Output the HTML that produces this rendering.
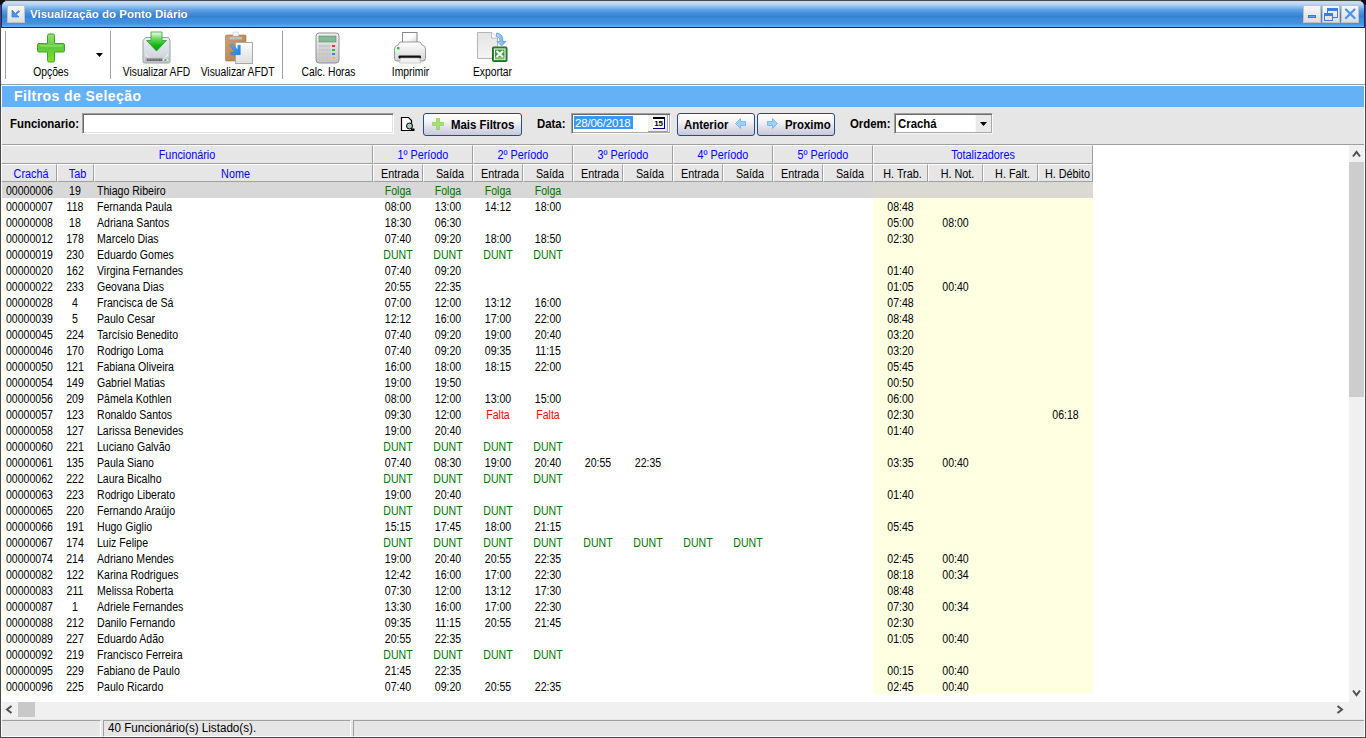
<!DOCTYPE html><html><head><meta charset="utf-8"><style>html,body{margin:0;padding:0;width:1366px;height:738px;overflow:hidden;background:#4a4a4a;font-family:"Liberation Sans",sans-serif;}
body div, body span{position:absolute;box-sizing:border-box;}
body svg{position:absolute;}
.blue{color:#0000ff;}
.green{color:#008000;}
.red{color:#ff0000;}
.hc{background:#e6e6e6;border-left:1px solid #fff;border-top:1px solid #fff;border-right:1px solid #a0a0a0;border-bottom:1px solid #a0a0a0;}
.ht{left:0;right:0;text-align:center;font-size:12px;line-height:14px;white-space:nowrap;color:#000;transform:scaleX(0.9);}
.ht.blue{color:#0000ff;}
.dt{font-size:12px;line-height:16px;height:16px;white-space:nowrap;color:#000;transform:scaleX(0.88);transform-origin:0 0;}
.dc{font-size:12px;line-height:16px;height:16px;white-space:nowrap;text-align:center;color:#000;transform:scaleX(0.88);}
.dc.green{color:#007400;}
.dc.red{color:#ff0000;}
.tl{font-size:12px;line-height:13px;white-space:nowrap;text-align:center;color:#000;transform:scaleX(0.86);}
.bl{font-size:12px;font-weight:bold;line-height:14px;white-space:nowrap;color:#000;transform:scaleX(0.95);transform-origin:0 0;}
.btn{border:1px solid #1f4e89;border-radius:3px;background:linear-gradient(to bottom,#ffffff 0%,#f4f4f8 35%,#e2e2ec 60%,#c8c8da 100%);}
.sep{width:1px;background:#a0a0a0;}
.tbtn{background:linear-gradient(to bottom,#f8f8f8,#dcdcdc);border:1px solid #c4c0bc;}
</style></head><body>
<!-- window frame -->
<div style="left:1px;top:28px;width:1364px;height:709px;background:#ffffff"></div>
<!-- title bar -->
<div style="left:0;top:0;width:5px;height:5px;background:#101010"></div><div style="left:1361px;top:0;width:5px;height:5px;background:#101010"></div>
<div style="left:1px;top:1px;width:1364px;height:27px;background:#1e1a9c;border-radius:6px 6px 0 0"></div>
<div style="left:2px;top:1px;width:1362px;height:26px;border-radius:5px 5px 0 0;background:linear-gradient(to bottom,#c6dcf8 0px,#c2daf6 2.5px,#9cc6f0 5px,#62a6ea 8.5px,#4a92de 11.5px,#3282d4 15.5px,#3c8cda 18px,#3e92e0 22px,#4aa4ee 24.5px,#64b8f8 26px)"></div>
<div class="tbtn" style="left:7px;top:5px;width:18px;height:18px"></div>
<svg style="left:11px;top:9px" width="10" height="10" viewBox="0 0 10 10"><path d="M1 1 L1 8 L8 8 L5.5 5.5 L8.5 2.5 L7.5 1.5 L4.5 4.5 Z" fill="#4a94f0" stroke="#3070c8" stroke-width="0.6"/></svg>
<div style="left:30px;top:6px;font-size:11.5px;font-weight:bold;color:#fff;line-height:16px;white-space:nowrap;text-shadow:0 0 1px #4060a0">Visualização do Ponto Diário</div>
<div class="tbtn" style="left:1303px;top:5px;width:18px;height:18px"></div>
<div style="left:1308px;top:15px;width:8px;height:3px;background:#5aa8f4;border:1px solid #3a78d0"></div>
<div class="tbtn" style="left:1322px;top:5px;width:18px;height:18px"></div>
<div style="left:1327px;top:8px;width:11px;height:10px;border:1px solid #3a7ee0;border-top-width:3px"></div>
<div style="left:1324px;top:13px;width:9px;height:8px;border:1px solid #3a7ee0;border-top-width:3px;background:#e4e4e4"></div>
<div class="tbtn" style="left:1341px;top:5px;width:18px;height:18px"></div>
<svg style="left:1344px;top:8px" width="12" height="12" viewBox="0 0 12 12"><path d="M2 1.5 L10.5 10 M10.5 1.5 L2 10" stroke="#4a96ee" stroke-width="2.3" stroke-linecap="round"/></svg>

<!-- toolbar -->
<div class="sep" style="left:5px;top:31px;height:48px"></div>
<div class="sep" style="left:110px;top:31px;height:48px"></div>
<div class="sep" style="left:282px;top:31px;height:48px"></div>
<div style="left:1px;top:84px;width:1364px;height:1px;background:#a0a0a0"></div>

<!-- plus icon -->
<svg style="left:36px;top:33px" width="31" height="31" viewBox="0 0 31 31">
<defs><linearGradient id="gp" x1="0" y1="0" x2="0" y2="1"><stop offset="0" stop-color="#98e070"/><stop offset="0.5" stop-color="#5cc83c"/><stop offset="1" stop-color="#88e020"/></linearGradient></defs>
<path d="M11.5 2.5 a1.5 1.5 0 0 1 1.5 -1.5 h4 a1.5 1.5 0 0 1 1.5 1.5 v8 h8.5 a1.5 1.5 0 0 1 1.5 1.5 v5.5 a1.5 1.5 0 0 1 -1.5 1.5 h-8.5 v8.5 a1.5 1.5 0 0 1 -1.5 1.5 h-4 a1.5 1.5 0 0 1 -1.5 -1.5 v-8.5 h-8.5 a1.5 1.5 0 0 1 -1.5 -1.5 v-5.5 a1.5 1.5 0 0 1 1.5 -1.5 h8.5 z" fill="url(#gp)" stroke="#3ca428" stroke-width="1"/>
<path d="M4 13 h22" stroke="#b0f090" stroke-width="1" opacity="0.7"/>
</svg>
<svg style="left:96px;top:53px" width="8" height="5" viewBox="0 0 8 5"><path d="M0 0 H7 L3.5 4 Z" fill="#000"/></svg>
<div class="tl" style="left:21px;top:66px;width:60px">Opções</div>

<!-- drive icon -->
<svg style="left:138px;top:28px" width="38" height="38" viewBox="0 0 38 38">
<defs><linearGradient id="gd" x1="0" y1="0" x2="0" y2="1"><stop offset="0" stop-color="#eceef2"/><stop offset="0.7" stop-color="#d4d8e0"/><stop offset="1" stop-color="#c4c8d0"/></linearGradient>
<linearGradient id="ga" x1="0" y1="0" x2="0" y2="1"><stop offset="0" stop-color="#f0fff0"/><stop offset="0.35" stop-color="#70d860"/><stop offset="0.7" stop-color="#10b810"/><stop offset="1" stop-color="#089808"/></linearGradient></defs>
<path d="M7.5 9.5 h23 l1.5 3 v21 a1.5 1.5 0 0 1 -1.5 1.5 h-24 a1.5 1.5 0 0 1 -1.5 -1.5 v-21 z" fill="url(#gd)" stroke="#9ca0a8" stroke-width="1"/>
<path d="M8 26 a11 5 0 0 0 22 0" fill="none" stroke="#f4f4f6" stroke-width="1"/>
<rect x="7.5" y="30" width="23" height="3.5" fill="#e8e8ec" stroke="#b0b4bc" stroke-width="0.6"/>
<rect x="8.5" y="30.5" width="16" height="2.5" fill="#68686c"/>
<path d="M10 31.8 h13" stroke="#a8a8b0" stroke-width="0.7" stroke-dasharray="2 1"/>
<rect x="26.5" y="31" width="2" height="2" fill="#30d030"/>
<path d="M13 4 h11 v8.5 h4.5 l-10 10.5 l-10 -10.5 h4.5 z" fill="url(#ga)" stroke="#30a030" stroke-width="0.8" stroke-linejoin="round"/>
</svg>
<div class="tl" style="left:116px;top:66px;width:81px">Visualizar AFD</div>

<!-- clipboard icon -->
<svg style="left:220px;top:28px" width="38" height="38" viewBox="0 0 38 38">
<defs><linearGradient id="gc" x1="0" y1="0" x2="1" y2="1"><stop offset="0" stop-color="#d0a070"/><stop offset="1" stop-color="#b07c48"/></linearGradient>
<linearGradient id="gw" x1="0" y1="0" x2="0" y2="1"><stop offset="0" stop-color="#fafafa"/><stop offset="1" stop-color="#e0e0e0"/></linearGradient>
<linearGradient id="gb" x1="0" y1="0" x2="1" y2="1"><stop offset="0" stop-color="#60b0f0"/><stop offset="1" stop-color="#1480e0"/></linearGradient></defs>
<rect x="5.5" y="7" width="20.5" height="26" rx="1" fill="url(#gc)" stroke="#a87440" stroke-width="0.6"/>
<rect x="13" y="4" width="5.5" height="4" fill="#f4f4f4" stroke="#c8c8c8" stroke-width="0.5"/>
<rect x="9.5" y="9" width="12.5" height="2.5" fill="#b8c0c8"/>
<rect x="15.5" y="14.5" width="17" height="21" fill="url(#gw)" stroke="#a8a8a8" stroke-width="1"/>
<path d="M10 17.5 l1.8 -1.8 l6 6 v-4.5 h2.5 v9.5 h-9.5 v-2.5 h4.5 z" fill="url(#gb)" stroke="#1070d0" stroke-width="0.4"/>
</svg>
<div class="tl" style="left:195px;top:66px;width:81px">Visualizar AFDT</div>

<!-- calculator -->
<svg style="left:315px;top:32px" width="25" height="32" viewBox="0 0 25 32">
<defs><linearGradient id="gk" x1="0" y1="0" x2="0" y2="1"><stop offset="0" stop-color="#f4f4f4"/><stop offset="1" stop-color="#c4c4c4"/></linearGradient></defs>
<rect x="1" y="1" width="23" height="30" rx="3" fill="url(#gk)" stroke="#909090" stroke-width="1"/>
<rect x="4" y="4" width="17" height="6" fill="#88b898" stroke="#608868" stroke-width="0.6"/>
<g fill="#d4d4d4" stroke="#b0b0b0" stroke-width="0.4">
<rect x="4" y="13" width="3" height="2"/><rect x="8" y="13" width="3" height="2"/><rect x="12" y="13" width="3" height="2"/>
<rect x="4" y="17" width="3" height="2"/><rect x="8" y="17" width="3" height="2"/><rect x="12" y="17" width="3" height="2"/>
<rect x="4" y="21" width="3" height="2"/><rect x="8" y="21" width="3" height="2"/><rect x="12" y="21" width="3" height="2"/>
<rect x="4" y="25" width="3" height="2"/><rect x="8" y="25" width="3" height="2"/><rect x="12" y="25" width="3" height="2"/>
</g>
<rect x="17" y="13" width="3" height="2" fill="#e83030"/><rect x="17" y="17" width="3" height="2" fill="#30c030"/>
<rect x="17" y="21" width="3" height="2" fill="#4080f0"/><rect x="17" y="25" width="3" height="2" fill="#f0c030"/>
</svg>
<div class="tl" style="left:288px;top:66px;width:81px">Calc. Horas</div>

<!-- printer -->
<svg style="left:390px;top:28px" width="40" height="38" viewBox="0 0 40 38">
<defs><linearGradient id="gr" x1="0" y1="0" x2="0" y2="1"><stop offset="0" stop-color="#ffffff"/><stop offset="1" stop-color="#d4d4d4"/></linearGradient>
<linearGradient id="gr2" x1="0" y1="0" x2="1" y2="1"><stop offset="0" stop-color="#ffffff"/><stop offset="0.5" stop-color="#ffffff"/><stop offset="1" stop-color="#d8d8d8"/></linearGradient></defs>
<rect x="12.5" y="4.5" width="14.5" height="10" fill="url(#gr2)" stroke="#888888" stroke-width="1"/>
<path d="M10 14 h20 l2 3 a4 4 0 0 1 3.5 4 v9.5 a2.5 2.5 0 0 1 -2.5 2.5 h-26 a2.5 2.5 0 0 1 -2.5 -2.5 v-9.5 a4 4 0 0 1 3.5 -4 z" fill="url(#gr)" stroke="#909090" stroke-width="0.9"/>
<rect x="8.5" y="27.5" width="22.5" height="3" rx="1" fill="#101010"/>
<path d="M10.5 30 h19 l1 5 h-21 z" fill="#f2f2f2" stroke="#b0b0b0" stroke-width="0.6"/>
<rect x="7" y="19" width="2.5" height="2.5" rx="0.8" fill="#30c030"/>
</svg>
<div class="tl" style="left:370px;top:66px;width:81px">Imprimir</div>

<!-- export -->
<svg style="left:472px;top:28px" width="40" height="38" viewBox="0 0 40 38">
<defs><linearGradient id="gdoc" x1="0" y1="0" x2="0" y2="1"><stop offset="0" stop-color="#e4e4e4"/><stop offset="1" stop-color="#f4f4f4"/></linearGradient>
<linearGradient id="gar" x1="0" y1="0" x2="1" y2="0"><stop offset="0" stop-color="#b8dcf8"/><stop offset="1" stop-color="#60a8f0"/></linearGradient></defs>
<path d="M5.5 4.5 h14.5 l5.5 5.5 v20.5 h-20 z" fill="url(#gdoc)" stroke="#b4b4b4" stroke-width="1"/>
<path d="M19.5 4.5 v5.5 h6" fill="#ffffff" stroke="#b4b4b4" stroke-width="0.9"/>
<path d="M24.5 5 q6.5 0.5 6.5 8 v0.5 h3 l-4.5 4.5 l-4.5 -4.5 h3 v-0.5 q0 -4 -3.5 -4.5 z" fill="url(#gar)" stroke="#5098e0" stroke-width="0.7" stroke-linejoin="round"/>
<rect x="20.5" y="19" width="14.5" height="14.5" rx="1" fill="#2e8a2e" stroke="#1e6e1e" stroke-width="1"/>
<rect x="22" y="20.5" width="11.5" height="11.5" fill="#ffffff"/>
<rect x="23" y="21.5" width="9.5" height="8" fill="#3a9a3a"/>
<rect x="23" y="29.5" width="9.5" height="2" fill="#70c060"/>
<path d="M24.5 23 l6.5 6 M31 23 l-6.5 6" stroke="#ffffff" stroke-width="2.2"/>
</svg>
<div class="tl" style="left:452px;top:66px;width:81px">Exportar</div>

<!-- filtros band -->
<div style="left:2px;top:86px;width:1362px;height:21px;background:#64b1f5"></div>
<div style="left:14px;top:88px;font-size:14px;font-weight:bold;color:#fff;letter-spacing:0.42px;line-height:16px;white-space:nowrap">Filtros de Seleção</div>

<!-- filter panel -->
<div style="left:2px;top:107px;width:1362px;height:37px;background:#e6e6e6"></div>
<div style="left:2px;top:144px;width:1362px;height:1px;background:#a0a0a0"></div>
<div class="bl" style="left:10px;top:117px">Funcionario:</div>
<div style="left:82px;top:113px;width:312px;height:21px;background:#fff;border-top:1px solid #a0a0a0;border-left:1px solid #a0a0a0;border-right:1px solid #fff;border-bottom:1px solid #fff;box-shadow:inset 1px 1px 0 #696969,inset -1px -1px 0 #e3e3e3"></div>
<svg style="left:400px;top:116px" width="17" height="16" viewBox="0 0 17 16"><path d="M1.5 1.5 h7 l3 3 v10 h-10 z" fill="#fff" stroke="#000" stroke-width="1.2"/><circle cx="9.5" cy="10" r="3" fill="#a8c8c8" stroke="#000" stroke-width="1"/><rect x="12" y="12.5" width="2.5" height="2.5" fill="#000"/></svg>
<div class="btn" style="left:423px;top:113px;width:99px;height:23px"></div>
<svg style="left:432px;top:118px" width="12" height="12" viewBox="0 0 12 12"><path d="M4.5 0.5 h3 v4 h4 v3 h-4 v4 h-3 v-4 h-4 v-3 h4 z" fill="#a8e070" stroke="#90d058" stroke-width="0.8" stroke-linejoin="round"/></svg>
<div class="bl" style="left:451px;top:118px">Mais Filtros</div>
<div class="bl" style="left:537px;top:117px">Data:</div>
<div style="left:571px;top:113px;width:100px;height:21px;background:#fff;border-top:1px solid #a0a0a0;border-left:1px solid #a0a0a0;border-right:1px solid #f8f8f8;border-bottom:1px solid #f8f8f8;box-shadow:inset 1px 1px 0 #696969,inset -1px -1px 0 #a8a8a8"></div>
<div style="left:574px;top:116px;width:59px;height:13px;background:#3399ff"></div>
<div style="left:575px;top:116px;font-size:11.5px;line-height:14px;color:#fff;white-space:nowrap;letter-spacing:-0.2px">28/06/2018</div>
<div style="left:648px;top:115px;width:20px;height:17px;background:#f0f0f0;border-right:1px solid #a0a0a0;border-bottom:1px solid #a0a0a0"></div>
<div style="left:653px;top:117px;width:12px;height:12px;border-top:2px solid #000;border-right:1px solid #000080;border-bottom:1px solid #000080;background:#fff;font-size:8px;font-weight:bold;line-height:9px;text-align:center;letter-spacing:-0.3px">15</div>
<div class="btn" style="left:677px;top:113px;width:78px;height:23px"></div>
<div class="bl" style="left:684px;top:118px">Anterior</div>
<svg style="left:735px;top:118px" width="11" height="11" viewBox="0 0 11 11"><path d="M0.5 5.5 l5 -5 v3 h5 v4 h-5 v3 z" fill="#9cd0f8" stroke="#6cb0e8" stroke-width="0.8"/></svg>
<div class="btn" style="left:757px;top:113px;width:78px;height:23px"></div>
<svg style="left:767px;top:118px" width="11" height="11" viewBox="0 0 11 11"><path d="M10.5 5.5 l-5 -5 v3 h-5 v4 h5 v3 z" fill="#9cd0f8" stroke="#6cb0e8" stroke-width="0.8"/></svg>
<div class="bl" style="left:785px;top:118px">Proximo</div>
<div class="bl" style="left:850px;top:117px">Ordem:</div>
<div style="left:894px;top:113px;width:99px;height:21px;background:#fff;border-top:1px solid #a0a0a0;border-left:1px solid #a0a0a0;border-right:1px solid #f8f8f8;border-bottom:1px solid #f8f8f8;box-shadow:inset 1px 1px 0 #696969,inset -1px -1px 0 #a8a8a8"></div>
<div class="bl" style="left:898px;top:117px">Crachá</div>
<div style="left:975px;top:115px;width:16px;height:17px;background:#eaeaea;border-left:1px solid #f8f8f8"></div>
<svg style="left:980px;top:122px" width="8" height="5" viewBox="0 0 8 5"><path d="M0 0 H7 L3.5 4 Z" fill="#000"/></svg>

<!-- grid -->
<div style="left:2px;top:145px;width:1347px;height:557px;background:#fff"></div>

<div class="hc" style="left:1px;top:145px;width:372px;height:19px"><span class="ht blue" style="top:2px">Funcionário</span></div>
<div class="hc" style="left:373px;top:145px;width:100px;height:19px"><span class="ht blue" style="top:2px">1º Período</span></div>
<div class="hc" style="left:473px;top:145px;width:100px;height:19px"><span class="ht blue" style="top:2px">2º Período</span></div>
<div class="hc" style="left:573px;top:145px;width:100px;height:19px"><span class="ht blue" style="top:2px">3º Período</span></div>
<div class="hc" style="left:673px;top:145px;width:100px;height:19px"><span class="ht blue" style="top:2px">4º Período</span></div>
<div class="hc" style="left:773px;top:145px;width:100px;height:19px"><span class="ht blue" style="top:2px">5º Período</span></div>
<div class="hc" style="left:873px;top:145px;width:220px;height:19px"><span class="ht blue" style="top:2px">Totalizadores</span></div>
<div class="hc" style="left:1px;top:164px;width:56px;height:18px"><span class="ht blue" style="top:2px;left:1.5px;right:-1.5px">Crachá</span></div>
<div class="hc" style="left:57px;top:164px;width:37px;height:18px"><span class="ht blue" style="top:2px;left:1.5px;right:-1.5px">Tab</span></div>
<div class="hc" style="left:94px;top:164px;width:279px;height:18px"><span class="ht blue" style="top:2px;left:1.5px;right:-1.5px">Nome</span></div>
<div class="hc" style="left:373px;top:164px;width:50px;height:18px"><span class="ht " style="top:2px;left:1.5px;right:-1.5px">Entrada</span></div>
<div class="hc" style="left:423px;top:164px;width:50px;height:18px"><span class="ht " style="top:2px;left:1.5px;right:-1.5px">Saída</span></div>
<div class="hc" style="left:473px;top:164px;width:50px;height:18px"><span class="ht " style="top:2px;left:1.5px;right:-1.5px">Entrada</span></div>
<div class="hc" style="left:523px;top:164px;width:50px;height:18px"><span class="ht " style="top:2px;left:1.5px;right:-1.5px">Saída</span></div>
<div class="hc" style="left:573px;top:164px;width:50px;height:18px"><span class="ht " style="top:2px;left:1.5px;right:-1.5px">Entrada</span></div>
<div class="hc" style="left:623px;top:164px;width:50px;height:18px"><span class="ht " style="top:2px;left:1.5px;right:-1.5px">Saída</span></div>
<div class="hc" style="left:673px;top:164px;width:50px;height:18px"><span class="ht " style="top:2px;left:1.5px;right:-1.5px">Entrada</span></div>
<div class="hc" style="left:723px;top:164px;width:50px;height:18px"><span class="ht " style="top:2px;left:1.5px;right:-1.5px">Saída</span></div>
<div class="hc" style="left:773px;top:164px;width:50px;height:18px"><span class="ht " style="top:2px;left:1.5px;right:-1.5px">Entrada</span></div>
<div class="hc" style="left:823px;top:164px;width:50px;height:18px"><span class="ht " style="top:2px;left:1.5px;right:-1.5px">Saída</span></div>
<div class="hc" style="left:873px;top:164px;width:55px;height:18px"><span class="ht " style="top:2px;left:1.5px;right:-1.5px">H. Trab.</span></div>
<div class="hc" style="left:928px;top:164px;width:55px;height:18px"><span class="ht " style="top:2px;left:1.5px;right:-1.5px">H. Not.</span></div>
<div class="hc" style="left:983px;top:164px;width:55px;height:18px"><span class="ht " style="top:2px;left:1.5px;right:-1.5px">H. Falt.</span></div>
<div class="hc" style="left:1038px;top:164px;width:55px;height:18px"><span class="ht " style="top:2px;left:1.5px;right:-1.5px">H. Débito</span></div>
<div style="left:873px;top:182px;width:220px;height:512px;background:#ffffe1"></div>
<div style="left:2px;top:182px;width:871px;height:16px;background:#d8d8d8"></div>
<div style="left:873px;top:182px;width:220px;height:16px;background:#dadad2"></div>
<div class="dt" style="left:6px;top:183px">00000006</div>
<div class="dc" style="left:57px;top:183px;width:36px">19</div>
<div class="dt" style="left:97px;top:183px">Thiago Ribeiro</div>
<div class="dc green" style="left:373px;top:183px;width:50px">Folga</div>
<div class="dc green" style="left:423px;top:183px;width:50px">Folga</div>
<div class="dc green" style="left:473px;top:183px;width:50px">Folga</div>
<div class="dc green" style="left:523px;top:183px;width:50px">Folga</div>
<div class="dt" style="left:6px;top:199px">00000007</div>
<div class="dc" style="left:57px;top:199px;width:36px">118</div>
<div class="dt" style="left:97px;top:199px">Fernanda Paula</div>
<div class="dc" style="left:373px;top:199px;width:50px">08:00</div>
<div class="dc" style="left:423px;top:199px;width:50px">13:00</div>
<div class="dc" style="left:473px;top:199px;width:50px">14:12</div>
<div class="dc" style="left:523px;top:199px;width:50px">18:00</div>
<div class="dc" style="left:873px;top:199px;width:55px">08:48</div>
<div class="dt" style="left:6px;top:215px">00000008</div>
<div class="dc" style="left:57px;top:215px;width:36px">18</div>
<div class="dt" style="left:97px;top:215px">Adriana Santos</div>
<div class="dc" style="left:373px;top:215px;width:50px">18:30</div>
<div class="dc" style="left:423px;top:215px;width:50px">06:30</div>
<div class="dc" style="left:873px;top:215px;width:55px">05:00</div>
<div class="dc" style="left:928px;top:215px;width:55px">08:00</div>
<div class="dt" style="left:6px;top:231px">00000012</div>
<div class="dc" style="left:57px;top:231px;width:36px">178</div>
<div class="dt" style="left:97px;top:231px">Marcelo Dias</div>
<div class="dc" style="left:373px;top:231px;width:50px">07:40</div>
<div class="dc" style="left:423px;top:231px;width:50px">09:20</div>
<div class="dc" style="left:473px;top:231px;width:50px">18:00</div>
<div class="dc" style="left:523px;top:231px;width:50px">18:50</div>
<div class="dc" style="left:873px;top:231px;width:55px">02:30</div>
<div class="dt" style="left:6px;top:247px">00000019</div>
<div class="dc" style="left:57px;top:247px;width:36px">230</div>
<div class="dt" style="left:97px;top:247px">Eduardo Gomes</div>
<div class="dc green" style="left:373px;top:247px;width:50px">DUNT</div>
<div class="dc green" style="left:423px;top:247px;width:50px">DUNT</div>
<div class="dc green" style="left:473px;top:247px;width:50px">DUNT</div>
<div class="dc green" style="left:523px;top:247px;width:50px">DUNT</div>
<div class="dt" style="left:6px;top:263px">00000020</div>
<div class="dc" style="left:57px;top:263px;width:36px">162</div>
<div class="dt" style="left:97px;top:263px">Virgina Fernandes</div>
<div class="dc" style="left:373px;top:263px;width:50px">07:40</div>
<div class="dc" style="left:423px;top:263px;width:50px">09:20</div>
<div class="dc" style="left:873px;top:263px;width:55px">01:40</div>
<div class="dt" style="left:6px;top:279px">00000022</div>
<div class="dc" style="left:57px;top:279px;width:36px">233</div>
<div class="dt" style="left:97px;top:279px">Geovana Dias</div>
<div class="dc" style="left:373px;top:279px;width:50px">20:55</div>
<div class="dc" style="left:423px;top:279px;width:50px">22:35</div>
<div class="dc" style="left:873px;top:279px;width:55px">01:05</div>
<div class="dc" style="left:928px;top:279px;width:55px">00:40</div>
<div class="dt" style="left:6px;top:295px">00000028</div>
<div class="dc" style="left:57px;top:295px;width:36px">4</div>
<div class="dt" style="left:97px;top:295px">Francisca de Sá</div>
<div class="dc" style="left:373px;top:295px;width:50px">07:00</div>
<div class="dc" style="left:423px;top:295px;width:50px">12:00</div>
<div class="dc" style="left:473px;top:295px;width:50px">13:12</div>
<div class="dc" style="left:523px;top:295px;width:50px">16:00</div>
<div class="dc" style="left:873px;top:295px;width:55px">07:48</div>
<div class="dt" style="left:6px;top:311px">00000039</div>
<div class="dc" style="left:57px;top:311px;width:36px">5</div>
<div class="dt" style="left:97px;top:311px">Paulo Cesar</div>
<div class="dc" style="left:373px;top:311px;width:50px">12:12</div>
<div class="dc" style="left:423px;top:311px;width:50px">16:00</div>
<div class="dc" style="left:473px;top:311px;width:50px">17:00</div>
<div class="dc" style="left:523px;top:311px;width:50px">22:00</div>
<div class="dc" style="left:873px;top:311px;width:55px">08:48</div>
<div class="dt" style="left:6px;top:327px">00000045</div>
<div class="dc" style="left:57px;top:327px;width:36px">224</div>
<div class="dt" style="left:97px;top:327px">Tarcísio Benedito</div>
<div class="dc" style="left:373px;top:327px;width:50px">07:40</div>
<div class="dc" style="left:423px;top:327px;width:50px">09:20</div>
<div class="dc" style="left:473px;top:327px;width:50px">19:00</div>
<div class="dc" style="left:523px;top:327px;width:50px">20:40</div>
<div class="dc" style="left:873px;top:327px;width:55px">03:20</div>
<div class="dt" style="left:6px;top:343px">00000046</div>
<div class="dc" style="left:57px;top:343px;width:36px">170</div>
<div class="dt" style="left:97px;top:343px">Rodrigo Loma</div>
<div class="dc" style="left:373px;top:343px;width:50px">07:40</div>
<div class="dc" style="left:423px;top:343px;width:50px">09:20</div>
<div class="dc" style="left:473px;top:343px;width:50px">09:35</div>
<div class="dc" style="left:523px;top:343px;width:50px">11:15</div>
<div class="dc" style="left:873px;top:343px;width:55px">03:20</div>
<div class="dt" style="left:6px;top:359px">00000050</div>
<div class="dc" style="left:57px;top:359px;width:36px">121</div>
<div class="dt" style="left:97px;top:359px">Fabiana Oliveira</div>
<div class="dc" style="left:373px;top:359px;width:50px">16:00</div>
<div class="dc" style="left:423px;top:359px;width:50px">18:00</div>
<div class="dc" style="left:473px;top:359px;width:50px">18:15</div>
<div class="dc" style="left:523px;top:359px;width:50px">22:00</div>
<div class="dc" style="left:873px;top:359px;width:55px">05:45</div>
<div class="dt" style="left:6px;top:375px">00000054</div>
<div class="dc" style="left:57px;top:375px;width:36px">149</div>
<div class="dt" style="left:97px;top:375px">Gabriel Matias</div>
<div class="dc" style="left:373px;top:375px;width:50px">19:00</div>
<div class="dc" style="left:423px;top:375px;width:50px">19:50</div>
<div class="dc" style="left:873px;top:375px;width:55px">00:50</div>
<div class="dt" style="left:6px;top:391px">00000056</div>
<div class="dc" style="left:57px;top:391px;width:36px">209</div>
<div class="dt" style="left:97px;top:391px">Pâmela Kothlen</div>
<div class="dc" style="left:373px;top:391px;width:50px">08:00</div>
<div class="dc" style="left:423px;top:391px;width:50px">12:00</div>
<div class="dc" style="left:473px;top:391px;width:50px">13:00</div>
<div class="dc" style="left:523px;top:391px;width:50px">15:00</div>
<div class="dc" style="left:873px;top:391px;width:55px">06:00</div>
<div class="dt" style="left:6px;top:407px">00000057</div>
<div class="dc" style="left:57px;top:407px;width:36px">123</div>
<div class="dt" style="left:97px;top:407px">Ronaldo Santos</div>
<div class="dc" style="left:373px;top:407px;width:50px">09:30</div>
<div class="dc" style="left:423px;top:407px;width:50px">12:00</div>
<div class="dc red" style="left:473px;top:407px;width:50px">Falta</div>
<div class="dc red" style="left:523px;top:407px;width:50px">Falta</div>
<div class="dc" style="left:873px;top:407px;width:55px">02:30</div>
<div class="dc" style="left:1038px;top:407px;width:55px">06:18</div>
<div class="dt" style="left:6px;top:423px">00000058</div>
<div class="dc" style="left:57px;top:423px;width:36px">127</div>
<div class="dt" style="left:97px;top:423px">Larissa Benevides</div>
<div class="dc" style="left:373px;top:423px;width:50px">19:00</div>
<div class="dc" style="left:423px;top:423px;width:50px">20:40</div>
<div class="dc" style="left:873px;top:423px;width:55px">01:40</div>
<div class="dt" style="left:6px;top:439px">00000060</div>
<div class="dc" style="left:57px;top:439px;width:36px">221</div>
<div class="dt" style="left:97px;top:439px">Luciano Galvão</div>
<div class="dc green" style="left:373px;top:439px;width:50px">DUNT</div>
<div class="dc green" style="left:423px;top:439px;width:50px">DUNT</div>
<div class="dc green" style="left:473px;top:439px;width:50px">DUNT</div>
<div class="dc green" style="left:523px;top:439px;width:50px">DUNT</div>
<div class="dt" style="left:6px;top:455px">00000061</div>
<div class="dc" style="left:57px;top:455px;width:36px">135</div>
<div class="dt" style="left:97px;top:455px">Paula Siano</div>
<div class="dc" style="left:373px;top:455px;width:50px">07:40</div>
<div class="dc" style="left:423px;top:455px;width:50px">08:30</div>
<div class="dc" style="left:473px;top:455px;width:50px">19:00</div>
<div class="dc" style="left:523px;top:455px;width:50px">20:40</div>
<div class="dc" style="left:573px;top:455px;width:50px">20:55</div>
<div class="dc" style="left:623px;top:455px;width:50px">22:35</div>
<div class="dc" style="left:873px;top:455px;width:55px">03:35</div>
<div class="dc" style="left:928px;top:455px;width:55px">00:40</div>
<div class="dt" style="left:6px;top:471px">00000062</div>
<div class="dc" style="left:57px;top:471px;width:36px">222</div>
<div class="dt" style="left:97px;top:471px">Laura Bicalho</div>
<div class="dc green" style="left:373px;top:471px;width:50px">DUNT</div>
<div class="dc green" style="left:423px;top:471px;width:50px">DUNT</div>
<div class="dc green" style="left:473px;top:471px;width:50px">DUNT</div>
<div class="dc green" style="left:523px;top:471px;width:50px">DUNT</div>
<div class="dt" style="left:6px;top:487px">00000063</div>
<div class="dc" style="left:57px;top:487px;width:36px">223</div>
<div class="dt" style="left:97px;top:487px">Rodrigo Liberato</div>
<div class="dc" style="left:373px;top:487px;width:50px">19:00</div>
<div class="dc" style="left:423px;top:487px;width:50px">20:40</div>
<div class="dc" style="left:873px;top:487px;width:55px">01:40</div>
<div class="dt" style="left:6px;top:503px">00000065</div>
<div class="dc" style="left:57px;top:503px;width:36px">220</div>
<div class="dt" style="left:97px;top:503px">Fernando Araújo</div>
<div class="dc green" style="left:373px;top:503px;width:50px">DUNT</div>
<div class="dc green" style="left:423px;top:503px;width:50px">DUNT</div>
<div class="dc green" style="left:473px;top:503px;width:50px">DUNT</div>
<div class="dc green" style="left:523px;top:503px;width:50px">DUNT</div>
<div class="dt" style="left:6px;top:519px">00000066</div>
<div class="dc" style="left:57px;top:519px;width:36px">191</div>
<div class="dt" style="left:97px;top:519px">Hugo Giglio</div>
<div class="dc" style="left:373px;top:519px;width:50px">15:15</div>
<div class="dc" style="left:423px;top:519px;width:50px">17:45</div>
<div class="dc" style="left:473px;top:519px;width:50px">18:00</div>
<div class="dc" style="left:523px;top:519px;width:50px">21:15</div>
<div class="dc" style="left:873px;top:519px;width:55px">05:45</div>
<div class="dt" style="left:6px;top:535px">00000067</div>
<div class="dc" style="left:57px;top:535px;width:36px">174</div>
<div class="dt" style="left:97px;top:535px">Luiz Felipe</div>
<div class="dc green" style="left:373px;top:535px;width:50px">DUNT</div>
<div class="dc green" style="left:423px;top:535px;width:50px">DUNT</div>
<div class="dc green" style="left:473px;top:535px;width:50px">DUNT</div>
<div class="dc green" style="left:523px;top:535px;width:50px">DUNT</div>
<div class="dc green" style="left:573px;top:535px;width:50px">DUNT</div>
<div class="dc green" style="left:623px;top:535px;width:50px">DUNT</div>
<div class="dc green" style="left:673px;top:535px;width:50px">DUNT</div>
<div class="dc green" style="left:723px;top:535px;width:50px">DUNT</div>
<div class="dt" style="left:6px;top:551px">00000074</div>
<div class="dc" style="left:57px;top:551px;width:36px">214</div>
<div class="dt" style="left:97px;top:551px">Adriano Mendes</div>
<div class="dc" style="left:373px;top:551px;width:50px">19:00</div>
<div class="dc" style="left:423px;top:551px;width:50px">20:40</div>
<div class="dc" style="left:473px;top:551px;width:50px">20:55</div>
<div class="dc" style="left:523px;top:551px;width:50px">22:35</div>
<div class="dc" style="left:873px;top:551px;width:55px">02:45</div>
<div class="dc" style="left:928px;top:551px;width:55px">00:40</div>
<div class="dt" style="left:6px;top:567px">00000082</div>
<div class="dc" style="left:57px;top:567px;width:36px">122</div>
<div class="dt" style="left:97px;top:567px">Karina Rodrigues</div>
<div class="dc" style="left:373px;top:567px;width:50px">12:42</div>
<div class="dc" style="left:423px;top:567px;width:50px">16:00</div>
<div class="dc" style="left:473px;top:567px;width:50px">17:00</div>
<div class="dc" style="left:523px;top:567px;width:50px">22:30</div>
<div class="dc" style="left:873px;top:567px;width:55px">08:18</div>
<div class="dc" style="left:928px;top:567px;width:55px">00:34</div>
<div class="dt" style="left:6px;top:583px">00000083</div>
<div class="dc" style="left:57px;top:583px;width:36px">211</div>
<div class="dt" style="left:97px;top:583px">Melissa Roberta</div>
<div class="dc" style="left:373px;top:583px;width:50px">07:30</div>
<div class="dc" style="left:423px;top:583px;width:50px">12:00</div>
<div class="dc" style="left:473px;top:583px;width:50px">13:12</div>
<div class="dc" style="left:523px;top:583px;width:50px">17:30</div>
<div class="dc" style="left:873px;top:583px;width:55px">08:48</div>
<div class="dt" style="left:6px;top:599px">00000087</div>
<div class="dc" style="left:57px;top:599px;width:36px">1</div>
<div class="dt" style="left:97px;top:599px">Adriele Fernandes</div>
<div class="dc" style="left:373px;top:599px;width:50px">13:30</div>
<div class="dc" style="left:423px;top:599px;width:50px">16:00</div>
<div class="dc" style="left:473px;top:599px;width:50px">17:00</div>
<div class="dc" style="left:523px;top:599px;width:50px">22:30</div>
<div class="dc" style="left:873px;top:599px;width:55px">07:30</div>
<div class="dc" style="left:928px;top:599px;width:55px">00:34</div>
<div class="dt" style="left:6px;top:615px">00000088</div>
<div class="dc" style="left:57px;top:615px;width:36px">212</div>
<div class="dt" style="left:97px;top:615px">Danilo Fernando</div>
<div class="dc" style="left:373px;top:615px;width:50px">09:35</div>
<div class="dc" style="left:423px;top:615px;width:50px">11:15</div>
<div class="dc" style="left:473px;top:615px;width:50px">20:55</div>
<div class="dc" style="left:523px;top:615px;width:50px">21:45</div>
<div class="dc" style="left:873px;top:615px;width:55px">02:30</div>
<div class="dt" style="left:6px;top:631px">00000089</div>
<div class="dc" style="left:57px;top:631px;width:36px">227</div>
<div class="dt" style="left:97px;top:631px">Eduardo Adão</div>
<div class="dc" style="left:373px;top:631px;width:50px">20:55</div>
<div class="dc" style="left:423px;top:631px;width:50px">22:35</div>
<div class="dc" style="left:873px;top:631px;width:55px">01:05</div>
<div class="dc" style="left:928px;top:631px;width:55px">00:40</div>
<div class="dt" style="left:6px;top:647px">00000092</div>
<div class="dc" style="left:57px;top:647px;width:36px">219</div>
<div class="dt" style="left:97px;top:647px">Francisco Ferreira</div>
<div class="dc green" style="left:373px;top:647px;width:50px">DUNT</div>
<div class="dc green" style="left:423px;top:647px;width:50px">DUNT</div>
<div class="dc green" style="left:473px;top:647px;width:50px">DUNT</div>
<div class="dc green" style="left:523px;top:647px;width:50px">DUNT</div>
<div class="dt" style="left:6px;top:663px">00000095</div>
<div class="dc" style="left:57px;top:663px;width:36px">229</div>
<div class="dt" style="left:97px;top:663px">Fabiano de Paulo</div>
<div class="dc" style="left:373px;top:663px;width:50px">21:45</div>
<div class="dc" style="left:423px;top:663px;width:50px">22:35</div>
<div class="dc" style="left:873px;top:663px;width:55px">00:15</div>
<div class="dc" style="left:928px;top:663px;width:55px">00:40</div>
<div class="dt" style="left:6px;top:679px">00000096</div>
<div class="dc" style="left:57px;top:679px;width:36px">225</div>
<div class="dt" style="left:97px;top:679px">Paulo Ricardo</div>
<div class="dc" style="left:373px;top:679px;width:50px">07:40</div>
<div class="dc" style="left:423px;top:679px;width:50px">09:20</div>
<div class="dc" style="left:473px;top:679px;width:50px">20:55</div>
<div class="dc" style="left:523px;top:679px;width:50px">22:35</div>
<div class="dc" style="left:873px;top:679px;width:55px">02:45</div>
<div class="dc" style="left:928px;top:679px;width:55px">00:40</div>
<!-- vertical scrollbar -->
<div style="left:1349px;top:145px;width:15px;height:574px;background:#f0f0f0"></div>
<div style="left:1349px;top:162px;width:15px;height:235px;background:#cdcdcd"></div>
<svg style="left:1352px;top:150px" width="9" height="8" viewBox="0 0 9 8"><path d="M1 6.5 L4.5 2 L8 6.5" fill="none" stroke="#505050" stroke-width="2"/></svg>
<svg style="left:1352px;top:689px" width="9" height="8" viewBox="0 0 9 8"><path d="M1 1.5 L4.5 6 L8 1.5" fill="none" stroke="#505050" stroke-width="2"/></svg>
<!-- horizontal scrollbar -->
<div style="left:2px;top:702px;width:1347px;height:17px;background:#f0f0f0"></div>
<div style="left:18px;top:702px;width:17px;height:15px;background:#c8c8c8"></div>
<svg style="left:5px;top:705px" width="8" height="9" viewBox="0 0 8 9"><path d="M6.5 1 L2 4.5 L6.5 8" fill="none" stroke="#505050" stroke-width="2"/></svg>
<svg style="left:1336px;top:705px" width="8" height="9" viewBox="0 0 8 9"><path d="M1.5 1 L6 4.5 L1.5 8" fill="none" stroke="#505050" stroke-width="2"/></svg>
<!-- status bar -->
<div style="left:2px;top:719px;width:1362px;height:17px;background:#e6e6e6"></div>
<div style="left:2px;top:720px;width:99px;height:17px;border-top:1px solid #a0a0a0;border-right:1px solid #fff;border-bottom:1px solid #fff"></div>
<div style="left:103px;top:720px;width:248px;height:17px;border-top:1px solid #a0a0a0;border-left:1px solid #a0a0a0;border-right:1px solid #fff;border-bottom:1px solid #fff"></div>
<div style="left:353px;top:720px;width:1011px;height:17px;border-top:1px solid #a0a0a0;border-left:1px solid #a0a0a0;border-bottom:1px solid #fff"></div>
<div style="left:108px;top:721px;font-size:12px;line-height:14px;white-space:nowrap;color:#000;transform:scaleX(0.97);transform-origin:0 0">40 Funcionário(s) Listado(s).</div>

</body></html>
